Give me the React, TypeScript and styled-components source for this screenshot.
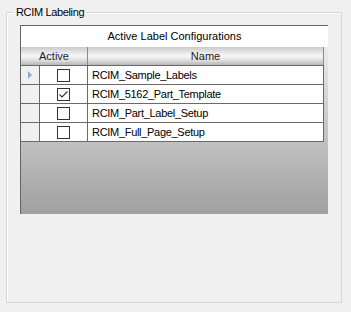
import React from 'react';
import styled, { createGlobalStyle } from 'styled-components';

const configs = [
  { name: 'RCIM_Sample_Labels', active: false, current: true },
  { name: 'RCIM_5162_Part_Template', active: true, current: false },
  { name: 'RCIM_Part_Label_Setup', active: false, current: false },
  { name: 'RCIM_Full_Page_Setup', active: false, current: false },
];

const GlobalStyle = createGlobalStyle`
  html, body {
    margin: 0;
    padding: 0;
    background: #f0f0f0;
    font-family: "Liberation Sans", Arial, sans-serif;
    font-size: 11px;
    color: #000;
  }
`;

const Page = styled.div`
  width: 351px;
  height: 312px;
  padding: 6px 0 0 6px;
  box-sizing: border-box;
`;

const GroupBox = styled.fieldset`
  box-sizing: border-box;
  width: 336px;
  height: 297px;
  margin: 0;
  padding: 0;
  border: 1px solid #d5d5d5;
  box-shadow: inset 1px 1px 0 #fff;
`;

const Legend = styled.legend`
  margin-left: 7px;
  padding: 0 2px;
  line-height: 12px;
  letter-spacing: -0.35px;
  color: #000;
`;

const Grid = styled.div`
  box-sizing: border-box;
  width: 308px;
  height: 189px;
  margin: 7px 0 0 13px;
  border-left: 1px solid #646464;
  border-top: 1px solid #646464;
  background: linear-gradient(#f5f5f5, #a0a0a0);
`;

const Caption = styled.div`
  height: 21px;
  line-height: 21px;
  background: #fff;
  text-align: center;
`;

const HeaderRow = styled.div`
  display: flex;
  width: 303px;
  height: 18px;
  background: linear-gradient(#c9c9c9 0%, #ececec 35%, #f6f6f6 50%, #dedede 75%, #b5b5b5 100%);
`;

const HeaderCell = styled.div<{ $w: number }>`
  box-sizing: border-box;
  width: ${(p) => p.$w}px;
  border-right: 1px solid #8a8a8a;
  line-height: 18px;
  text-align: center;
  color: #1a1a1a;
`;

const Row = styled.div<{ $last?: boolean }>`
  display: flex;
  width: 303px;
  height: ${(p) => (p.$last ? 20 : 19)}px;
  box-sizing: border-box;
  border-top: 1px solid #6a6a6a;
  border-bottom: ${(p) => (p.$last ? '1px solid #6a6a6a' : 'none')};
`;

const RowHead = styled.div`
  box-sizing: border-box;
  width: 19px;
  border-right: 1px solid #6a6a6a;
  background: #f0f0f0;
  display: flex;
  align-items: center;
  justify-content: center;
`;

const Marker = styled.div`
  width: 0;
  height: 0;
  border-top: 4px solid transparent;
  border-bottom: 4px solid transparent;
  border-left: 4px solid #8fabcf;
`;

const ActiveCell = styled.div`
  box-sizing: border-box;
  width: 48px;
  border-right: 1px solid #6a6a6a;
  background: #fff;
  display: flex;
  align-items: center;
  justify-content: center;
`;

const Check = styled.div`
  box-sizing: border-box;
  width: 13px;
  height: 13px;
  border: 1px solid #333;
  background: #fff;
  display: flex;
  align-items: center;
  justify-content: center;
`;

const NameCell = styled.div`
  box-sizing: border-box;
  width: 236px;
  border-right: 1px solid #6a6a6a;
  background: #fff;
  padding-left: 4px;
  line-height: 18px;
  letter-spacing: -0.3px;
  white-space: nowrap;
`;

const CheckMark = () => (
  <svg width="11" height="11" viewBox="0 0 11 11">
    <path d="M1.5 5.5 L4 8 L9.5 2.5" fill="none" stroke="#333" strokeWidth="1.1" />
  </svg>
);

const App = () => {
  return (
    <>
      <GlobalStyle />
      <Page>
        <GroupBox>
          <Legend>RCIM Labeling</Legend>
          <Grid>
            <Caption>Active Label Configurations</Caption>
            <HeaderRow>
              <HeaderCell $w={67}>Active</HeaderCell>
              <HeaderCell $w={236}>Name</HeaderCell>
            </HeaderRow>
            {configs.map((el, index) => (
              <Row key={index} $last={index === configs.length - 1}>
                <RowHead>{el.current && <Marker />}</RowHead>
                <ActiveCell>
                  <Check>{el.active && <CheckMark />}</Check>
                </ActiveCell>
                <NameCell>{el.name}</NameCell>
              </Row>
            ))}
          </Grid>
        </GroupBox>
      </Page>
    </>
  );
};

export default App;
